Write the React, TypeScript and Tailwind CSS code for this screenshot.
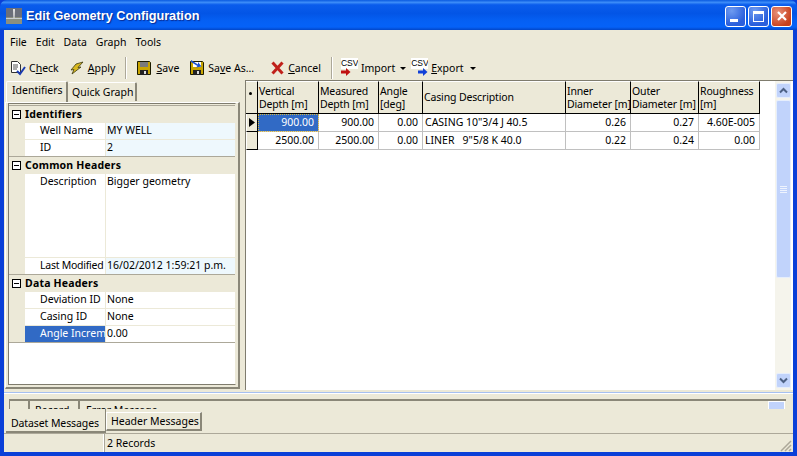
import React from "react";

const font = "font-['Noto_Sans','Liberation_Sans',sans-serif] text-[10.5px] leading-[13px] text-black";

function U({ children }: { children: React.ReactNode }) {
  return <span className="underline underline-offset-1">{children}</span>;
}

function Sep() {
  return <div className="w-[2px] h-[22px] mx-[5px] border-l border-l-[#aca899] bg-white shrink-0" />;
}

function TB({ icon, children, gap = "gap-[4px]", cls = "" }: { icon: React.ReactNode; children: React.ReactNode; gap?: string; cls?: string }) {
  return (
    <div className={`flex items-center h-[24px] whitespace-nowrap shrink-0 ${gap} ${cls}`}>
      {icon}
      <span>{children}</span>
    </div>
  );
}

function Disk({ arrow }: { arrow?: boolean }) {
  return (
    <svg width="16" height="16" viewBox="0 0 16 16" className="shrink-0">
      <path d="M1.5 1.5h12l1 1v12h-13z" fill="#c8a400" stroke="#1c1c00" />
      <rect x="4" y="2" width="8" height="5" fill={arrow ? "#fff" : "#7a7a7a"} />
      <rect x="4" y="10" width="8" height="5" fill="#222" />
      <rect x="8" y="11" width="2" height="3" fill="#ddd" />
      {arrow && <path d="M2 0l7 4.5V2l3.5 4.5L7 7.5 8.5 6 2 2z" fill="#1a4fd0" />}
    </svg>
  );
}

function CsvIcon({ color, right }: { color: string; right?: boolean }) {
  return (
    <div className={`relative w-[17px] h-[18px] shrink-0 ${right ? "mt-[-3px]" : "mt-[-2px]"}`}>
      <span className="absolute left-0 top-0 w-[17px] overflow-hidden bg-white font-['Liberation_Sans',sans-serif] text-[8.5px] leading-[11px] h-[11px]">CSV</span>
      <svg className={`absolute top-[10px] ${right ? "left-[7px]" : "left-0"}`} width="10" height="8" viewBox="0 0 10 8">
        <path d="M0 2.5h5V0l4.5 4L5 8V5.5H0z" fill={color} />
      </svg>
    </div>
  );
}

function Minus() {
  return (
    <div className="w-[9px] h-[9px] border border-black bg-white flex items-center justify-center mx-[3px] shrink-0">
      <div className="w-[5px] h-[1px] bg-black" />
    </div>
  );
}

function Group({ title }: { title: string }) {
  return (
    <div className="h-[17px] shrink-0 flex items-center bg-[#ece9d8] border-t border-[#aca899] font-bold tracking-[0.2px]">
      <Minus />
      <span className="ml-[1px]">{title}</span>
    </div>
  );
}

function Row({ label, value, tint, sel, tight, h = "h-[17px]" }: { label: string; value: string; tint?: boolean; sel?: boolean; tight?: boolean; h?: string }) {
  return (
    <div className={`flex shrink-0 ${h} border-t border-[#ece9d8]`}>
      <div className="w-[16px] bg-[#ece9d8] shrink-0" />
      <div className={`w-[80px] shrink-0 pl-[15px] pt-[1px] overflow-hidden whitespace-nowrap ${tight ? "tracking-[-0.25px]" : ""} ${sel ? "bg-[#316ac5] text-white" : "bg-white"}`}>{label}</div>
      <div className={`flex-1 border-l border-[#ece9d8] pl-[1px] pt-[1px] whitespace-nowrap overflow-hidden ${tint ? "bg-[#eef8fd]" : "bg-white"}`}>{value}</div>
    </div>
  );
}

const cols = ["w-[61px]", "w-[60px]", "w-[44px]", "w-[143px]", "w-[65px]", "w-[68px]", "w-[61px]"];

function Head({ w, children, center }: { w: string; children: React.ReactNode; center?: boolean }) {
  return (
    <div className={`${w} shrink-0 h-[33px] bg-[#ece9d8] border-r border-b border-black border-t border-t-white pl-[1px] tracking-[-0.15px] overflow-hidden flex ${center ? "items-center" : "pt-[3px]"} leading-[13px] whitespace-pre`}>
      {children}
    </div>
  );
}

function Cell({ w, children, left, sel }: { w: string; children: React.ReactNode; left?: boolean; sel?: boolean }) {
  return (
    <div className={`${w} shrink-0 h-full border-r border-b border-[#c0c0c0] flex items-center whitespace-pre ${left ? "pl-[2px]" : "justify-end pr-[4px]"} ${sel ? "bg-[#316ac5] text-white outline-1 outline-dotted outline-[#d8b840] -outline-offset-1" : "bg-white"}`}>
      {children}
    </div>
  );
}

function RowHead({ active }: { active?: boolean }) {
  return (
    <div className="w-[12px] h-full shrink-0 bg-[#ece9d8] border-r border-b border-black border-l border-l-white flex items-center justify-center">
      {active && (
        <svg width="6" height="9" viewBox="0 0 6 9"><path d="M0 0l6 4.5L0 9z" fill="#000" /></svg>
      )}
    </div>
  );
}

function DataRow({ h, vals, active }: { h: string; vals: string[]; active?: boolean }) {
  return (
    <div className={`flex ${h}`}>
      <RowHead active={active} />
      {vals.map((v, i) => (
        <Cell key={i} w={cols[i]} left={i === 3} sel={active && i === 0}>{v}</Cell>
      ))}
    </div>
  );
}

function WinBtn({ children, red }: { children: React.ReactNode; red?: boolean }) {
  return (
    <div className={`w-[21px] h-[21px] rounded-[3px] border border-white flex items-center justify-center relative overflow-hidden ${red ? "bg-[radial-gradient(circle_at_30%_30%,#e8917a,#c8401c_75%)]" : "bg-[radial-gradient(circle_at_30%_20%,#6f9bf0,#2a5fdc_70%)]"}`}>
      {children}
    </div>
  );
}

function ScrollBtn({ up }: { up?: boolean }) {
  return (
    <div className="w-[15px] h-[15px] rounded-[2px] bg-[#c1d3fb] border border-[#e6eefc] flex items-center justify-center mx-auto shrink-0">
      <svg width="9" height="7" viewBox="0 0 9 7">
        <path d={up ? "M1 5.5l3.5-3.5L8 5.5" : "M1 1.5l3.5 3.5L8 1.5"} fill="none" stroke="#4d6185" strokeWidth="2" />
      </svg>
    </div>
  );
}

export default function App() {
  return (
    <div className={`w-[797px] h-[456px] overflow-hidden flex flex-col bg-[#0a3fd8] ${font}`}>
      {/* Title bar */}
      <div className="h-[30px] shrink-0 flex items-center pl-[6px] pr-[5px] pt-[2px] rounded-t-[7px] bg-[linear-gradient(180deg,#0a5ae0_0%,#3c8cf8_8%,#0a5cec_16%,#0355e6_45%,#0560f4_70%,#0562f8_90%,#0246c8_100%)]">
        <svg width="16" height="16" viewBox="0 0 16 16" className="mr-[4px] shrink-0">
          <rect width="16" height="16" fill="#6b6f7a" />
          <rect y="9" width="16" height="7" fill="#8a8f80" />
          <rect y="10" width="16" height="1" fill="#c8ccd0" />
          <path d="M7 1h2l-.5 9h-1z" fill="#e8e8e8" />
        </svg>
        <span className="flex-1 text-white font-bold text-[12.7px] font-['Liberation_Sans',sans-serif] [text-shadow:1px_1px_1px_#0a2a90] whitespace-nowrap mt-[1px]">Edit Geometry Configuration</span>
        <div className="flex gap-[2px]">
          <WinBtn><div className="w-[8px] h-[3px] bg-white absolute left-[4px] bottom-[4px]" /></WinBtn>
          <WinBtn><div className="w-[11px] h-[11px] border border-white border-t-[3px]" /></WinBtn>
          <WinBtn red>
            <svg width="12" height="12" viewBox="0 0 12 12"><path d="M2 2l8 8M10 2l-8 8" stroke="#fff" strokeWidth="2.2" /></svg>
          </WinBtn>
        </div>
      </div>

      <div className="flex-1 mx-[4px] mb-[4px] bg-[#ece9d8] flex flex-col min-h-0">
        {/* Menu */}
        <div className="h-[23px] shrink-0 flex items-center gap-[9px] pl-[6px] pt-[2px]">
          <span>File</span><span>Edit</span><span>Data</span><span>Graph</span><span>Tools</span>
        </div>
        {/* Toolbar */}
        <div className="h-[27px] shrink-0 flex items-center pl-[6px] pt-[3px]">
          <TB gap="gap-[3px]" icon={
            <svg width="16" height="16" viewBox="0 0 16 16" className="shrink-0">
              <path d="M1.5 1.5h6l3 3v8h-9z" fill="#fff" stroke="#333" />
              <path d="M3 5h5M3 7h5M3 9h4" stroke="#555" />
              <path d="M7 11l3 3 5-7" fill="none" stroke="#1a3ab0" strokeWidth="2" />
            </svg>
          }><span>C<U>h</U>eck</span></TB>
          <TB cls="ml-[11px]" gap="gap-[4px]" icon={
            <svg width="14" height="14" viewBox="0 0 14 14" className="shrink-0">
              <path d="M13 1L6 3 1 9l3-.5L2 13l9-7-3 .5z" fill="#d8b820" stroke="#3c3a10" strokeWidth="0.8" />
            </svg>
          }><span><U>A</U>pply</span></TB>
          <div className="ml-[5px]"><Sep /></div>
          <TB cls="ml-[4px]" gap="gap-[4px]" icon={<Disk />}><span><U>S</U>ave</span></TB>
          <TB cls="ml-[10px]" gap="gap-[3px]" icon={<Disk arrow />}><span>Sa<U>v</U>e As...</span></TB>
          <TB cls="ml-[17px]" gap="gap-[4px]" icon={
            <svg width="13" height="14" viewBox="0 0 13 14" className="shrink-0"><path d="M1.5 1.5l10 11M11.5 1.5l-10 11" stroke="#c0201a" strokeWidth="3" /></svg>
          }><span><U>C</U>ancel</span></TB>
          <div className="ml-[5px]"><Sep /></div>
          <TB cls="ml-[3px]" gap="gap-[3px]" icon={<CsvIcon color="#c01010" />}><span>Import</span></TB>
          <svg width="6" height="3" viewBox="0 0 6 3" className="ml-[5px] shrink-0"><path d="M0 0h6L3 3z" fill="#000" /></svg>
          <TB cls="ml-[5px]" gap="gap-[3px]" icon={<CsvIcon color="#1040d8" right />}><span><U>E</U>xport</span></TB>
          <svg width="6" height="3" viewBox="0 0 6 3" className="ml-[6px] shrink-0"><path d="M0 0h6L3 3z" fill="#000" /></svg>
        </div>

        {/* Main */}
        <div className="h-[312px] shrink-0 flex">
          {/* Left */}
          <div className="w-[236px] shrink-0 flex flex-col pt-[1px]">
            <div className="h-[21px] shrink-0 flex items-end pl-[2px] relative z-10 whitespace-nowrap">
              <div className="w-[62px] h-[21px] bg-[#ece9d8] border-l border-l-white border-t border-t-white rounded-t-[2px] border-r-2 border-r-[#8a8778] pl-[5px] pt-[2px]">Identifiers</div>
              <div className="w-[69px] h-[19px] mb-[1px] bg-[#ece9d8] border-t border-t-white border-r-2 border-r-[#8a8778] rounded-t-[2px] pl-[4px] pt-[3px]">Quick Graph</div>
            </div>
            <div className="flex-1 min-h-0 ml-[1px] mb-[3px] border border-white border-r-2 border-r-[#8a8778] border-b-2 border-b-[#8a8778] pb-[2px] pl-[2px] pr-[2px]">
              <div className="h-full border border-[#7f7c6e] border-r-[#ece9d8] bg-white flex flex-col">
                <div className="h-[1px] shrink-0 bg-[#ece9d8]" />
                <Group title="Identifiers" />
                <Row label="Well Name" value="MY WELL" tint />
                <Row label="ID" value="2" tint />
                <Group title="Common Headers" />
                <Row label="Description" value="Bigger geometry" h="h-[84px]" />
                <Row label="Last Modified" value="16/02/2012 1:59:21 p.m." tint tight />
                <Group title="Data Headers" />
                <Row label="Deviation ID" value="None" />
                <Row label="Casing ID" value="None" />
                <Row label="Angle Increment" value="0.00" sel />
                <div className="flex-1 bg-white border-t border-[#aca899]" />
              </div>
            </div>
          </div>
          {/* Splitter */}
          <div className="w-[5px] shrink-0" />
          {/* Grid */}
          <div className="flex-1 border-l border-l-[#7f7c6e] border-t border-t-[#7f7c6e] mb-[2px] bg-white flex min-w-0">
            <div className="flex-1 min-w-0">
              <div className="flex">
                <Head w="w-[12px]" center>
                  <div className="w-[3px] h-[3px] rounded-full bg-black mt-[-8px] ml-[2px]" />
                </Head>
                <Head w={cols[0]}>{"Vertical\nDepth [m]"}</Head>
                <Head w={cols[1]}>{"Measured\nDepth [m]"}</Head>
                <Head w={cols[2]}>{"Angle\n[deg]"}</Head>
                <Head w={cols[3]} center>Casing Description</Head>
                <Head w={cols[4]}>{"Inner\nDiameter [m]"}</Head>
                <Head w={cols[5]}>{"Outer\nDiameter [m]"}</Head>
                <Head w={cols[6]}>{"Roughness\n[m]"}</Head>
              </div>
              <DataRow h="h-[18px]" active vals={["900.00", "900.00", "0.00", 'CASING 10"3/4 J 40.5', "0.26", "0.27", "4.60E-005"]} />
              <DataRow h="h-[18px]" vals={["2500.00", "2500.00", "0.00", 'LINER   9"5/8 K 40.0', "0.22", "0.24", "0.00"]} />
            </div>
            <div className="w-[16px] mr-[2px] shrink-0 bg-[#f5f4ec] flex flex-col pt-[2px] pb-[2px]">
              <ScrollBtn up />
              <div className="mx-auto w-[15px] h-[178px] mt-[2px] bg-[#c1d3fb] border border-[#e6eefc] rounded-[2px] flex flex-col items-center justify-center gap-[1px] shrink-0">
                <div className="w-[7px] h-[1px] bg-[#eef3fe]" />
                <div className="w-[7px] h-[1px] bg-[#eef3fe]" />
                <div className="w-[7px] h-[1px] bg-[#eef3fe]" />
                <div className="w-[7px] h-[1px] bg-[#eef3fe]" />
              </div>
              <div className="flex-1" />
              <ScrollBtn />
            </div>
          </div>
        </div>

        {/* Bottom */}
        <div className="flex-1 flex flex-col min-h-0">
          <div className="h-[1px] bg-[#a6c0f0] shrink-0" />
          <div className="h-[16px] shrink-0 pt-[5px] border-t border-t-white overflow-hidden">
            <div className="ml-[5px] mr-[7px] h-[20px] flex border-t-2 border-t-[#8a8778] border-l border-l-[#8a8778]">
              <div className="w-[20px] border-r-2 border-r-[#8a8778]" />
              <div className="w-[50px] border-r-2 border-r-[#8a8778] pl-[5px] pt-[3px]">Record</div>
              <div className="pl-[6px] pt-[3px] whitespace-nowrap">Error Message</div>
              <div className="flex-1" />
              <div className="w-[17px] h-[9px] bg-[#c1d3fb] border border-white mr-[1px]" />
            </div>
          </div>
          <div className="h-[24px] shrink-0 flex items-start bg-[#ece9d8] whitespace-nowrap">
            <div className="w-[100px] h-[24px] ml-[2px] pl-[5px] pt-[8px] bg-[#ece9d8] border-b-2 border-b-[#8a8778] border-r border-r-[#8a8778] tracking-[-0.1px]">Dataset Messages</div>
            <div className="w-[96px] h-[19px] mt-[3px] pl-[4px] pt-[2px] bg-[#ece9d8] border-l border-l-white border-t border-t-white border-r-2 border-r-[#8a8778] border-b-2 border-b-[#8a8778]">Header Messages</div>
            <div className="flex-1" />
          </div>
          <div className="flex-1 flex border-t border-t-[#aca899]">
            <div className="w-[99px] ml-[1px] border-r border-r-white" />
            <div className="flex-1 border-l border-l-[#aca899] pl-[2px] pt-[3px]">2 Records</div>
            <svg width="12" height="12" viewBox="0 0 12 12" className="self-end mr-[1px]">
              <path d="M11 1L1 11M11 5l-6 6M11 9l-2 2" stroke="#aca899" strokeWidth="1.5" />
            </svg>
          </div>
        </div>
      </div>
    </div>
  );
}
